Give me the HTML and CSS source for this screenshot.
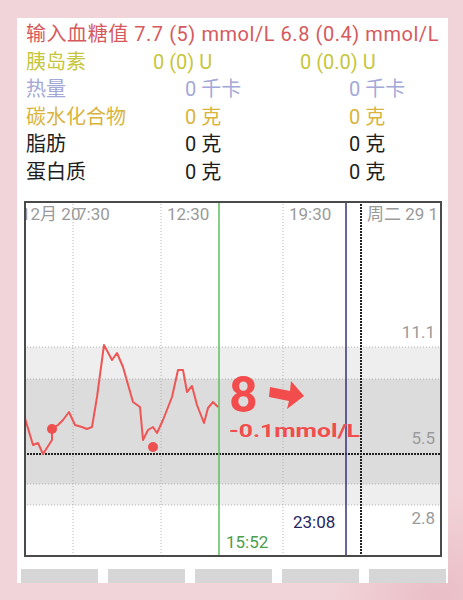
FILE: index.html
```html
<!DOCTYPE html>
<html lang="zh">
  <head>
    <meta charset="UTF-8" />
    <meta name="viewport" content="width=device-width, initial-scale=1.0" />
    <title>血糖</title>
    <link rel="stylesheet" href="styles.css">
  </head>
  <body>
    <div class="card">
      <div class="summary">
        <div class="row bg">输入血糖值 7.7 (5) mmol/L 6.8 (0.4) mmol/L</div>
        <div class="row ins"><span>胰岛素</span><span>0 (0) U</span><span>0 (0.0) U</span></div>
        <div class="row kcal"><span>热量</span><span>0 千卡</span><span>0 千卡</span></div>
        <div class="row carb"><span>碳水化合物</span><span>0 克</span><span>0 克</span></div>
        <div class="row plain"><span>脂肪</span><span>0 克</span><span>0 克</span></div>
        <div class="row plain"><span>蛋白质</span><span>0 克</span><span>0 克</span></div>
      </div>

      <div class="chart">
        <svg width="418" height="356" viewBox="0 0 418 356">
          <!-- target range bands -->
          <rect x="0" y="146" width="418" height="32" fill="#eeeeee" />
          <rect x="0" y="178" width="418" height="105" fill="#dcdcdc" />
          <rect x="0" y="283" width="418" height="21" fill="#eeeeee" />

          <g class="grid">
            <line x1="0" y1="146" x2="418" y2="146" />
            <line x1="0" y1="178" x2="418" y2="178" />
            <line x1="0" y1="283" x2="418" y2="283" />
            <line x1="0" y1="304" x2="418" y2="304" />
            <line x1="49" y1="0" x2="49" y2="356" />
            <line x1="137" y1="0" x2="137" y2="356" />
            <line x1="259" y1="0" x2="259" y2="356" />
          </g>
          <line class="low" x1="0" y1="253" x2="418" y2="253" />
          <line class="day" x1="337" y1="0" x2="337" y2="356" />

          <line x1="195" y1="0" x2="195" y2="356" stroke="#5cc05c" stroke-width="1.5" />
          <line x1="322" y1="0" x2="322" y2="356" stroke="#33337a" stroke-width="1.5" />

          <g class="axis">
            <text x="-3" y="19">12月 20</text>
            <text x="53" y="19">7:30</text>
            <text x="143" y="19">12:30</text>
            <text x="265" y="19">19:30</text>
            <text x="343" y="19">周二 29 1</text>
            <text x="411" y="137" text-anchor="end">11.1</text>
            <text x="411" y="243" text-anchor="end">5.5</text>
            <text x="411" y="323" text-anchor="end">2.8</text>
          </g>

          <polyline class="curve" points="0,214 9,244 14,242 19,253 28,239 28,228 34,224 39,219 45,211 51,224 58,226 63,228 68,226 73,196 80,144 88,159 93,152 99,166 109,201 116,206 119,239 124,229 129,226 133,232 139,219 148,196 154,169 159,169 163,191 168,185 173,204 180,222 184,207 189,201 194,206" />
          <circle cx="28" cy="228" r="5" fill="#ee4f4f" />
          <circle cx="129" cy="246" r="5" fill="#ee4f4f" />

          <text class="now" x="205" y="211">8</text>
          <polygon points="246,186 266,190 267,180 280,195 263,208 265,200 245,196" fill="#f24c4c" />
          <text class="delta" x="205" y="236" textLength="131" lengthAdjust="spacingAndGlyphs">-0.1mmol/L</text>

          <text class="mark green" x="202" y="347">15:52</text>
          <text class="mark navy" x="269" y="327">23:08</text>

          <rect x="1" y="1" width="416" height="354" fill="none" stroke="#4a4a4a" stroke-width="2" />
        </svg>
      </div>

      <div class="buttons">
        <div class="btn"></div>
        <div class="btn"></div>
        <div class="btn"></div>
        <div class="btn"></div>
        <div class="btn"></div>
      </div>
    </div>
  </body>
</html>
```

FILE: styles.css
```css
body {
  margin: 0;
  height: 600px;
  overflow: hidden;
  background: #f1d4d9;
  background-image: radial-gradient(circle at 440px 600px, #eabdc5 0, #f1d4d9 110px);
  font-family: Roboto, "Noto Sans CJK SC", sans-serif;
}
.card {
  margin: 18px 0 0 17px;
  width: 431px;
  height: 565px;
  background: #fff;
  overflow: hidden;
  box-sizing: border-box;
  padding-top: 3px;
}
.summary {
  padding-left: 9px;
}
.row {
  font-size: 20px;
  line-height: 27.6px;
  height: 27.6px;
  white-space: nowrap;
  display: grid;
  grid-template-columns: 159px 164px 1fr;
}
.bg {
  display: block;
  color: #d65a5d;
  letter-spacing: 0.55px;
}
.ins {
  grid-template-columns: 127px 147px 1fr;
  color: #c6c63c;
}
.kcal {
  color: #a4a8d8;
}
.carb {
  color: #d9b43c;
}
.plain {
  color: #1e1e1e;
}
.chart {
  margin: 14px 0 0 7px;
  width: 418px;
  height: 356px;
}
.chart svg {
  display: block;
}
.grid line {
  stroke: #b4b4b4;
  stroke-width: 1;
  stroke-dasharray: 1 2;
}
.low {
  stroke: #222;
  stroke-width: 2;
  stroke-dasharray: 2 1;
}
.day {
  stroke: #222;
  stroke-width: 2;
  stroke-dasharray: 2 1;
}
.axis text {
  font-size: 17px;
  fill: #9a9a9a;
  font-family: Roboto, "Noto Sans CJK SC", sans-serif;
}
.curve {
  fill: none;
  stroke: #ee5555;
  stroke-width: 2;
  stroke-linejoin: round;
}
.now {
  font-size: 50px;
  font-weight: bold;
  fill: #f24c4c;
  font-family: Roboto, sans-serif;
}
.delta {
  font-size: 19px;
  font-weight: bold;
  fill: #f24c4c;
  font-family: Roboto, sans-serif;
}
.mark {
  font-size: 17px;
  font-family: Roboto, sans-serif;
}
.green {
  fill: #4c9e4c;
}
.navy {
  fill: #26265e;
}
.buttons {
  display: flex;
  gap: 10px;
  margin: 12px 0 0 4px;
}
.btn {
  width: 77px;
  height: 20px;
  background: #d6d6d6;
}
```
